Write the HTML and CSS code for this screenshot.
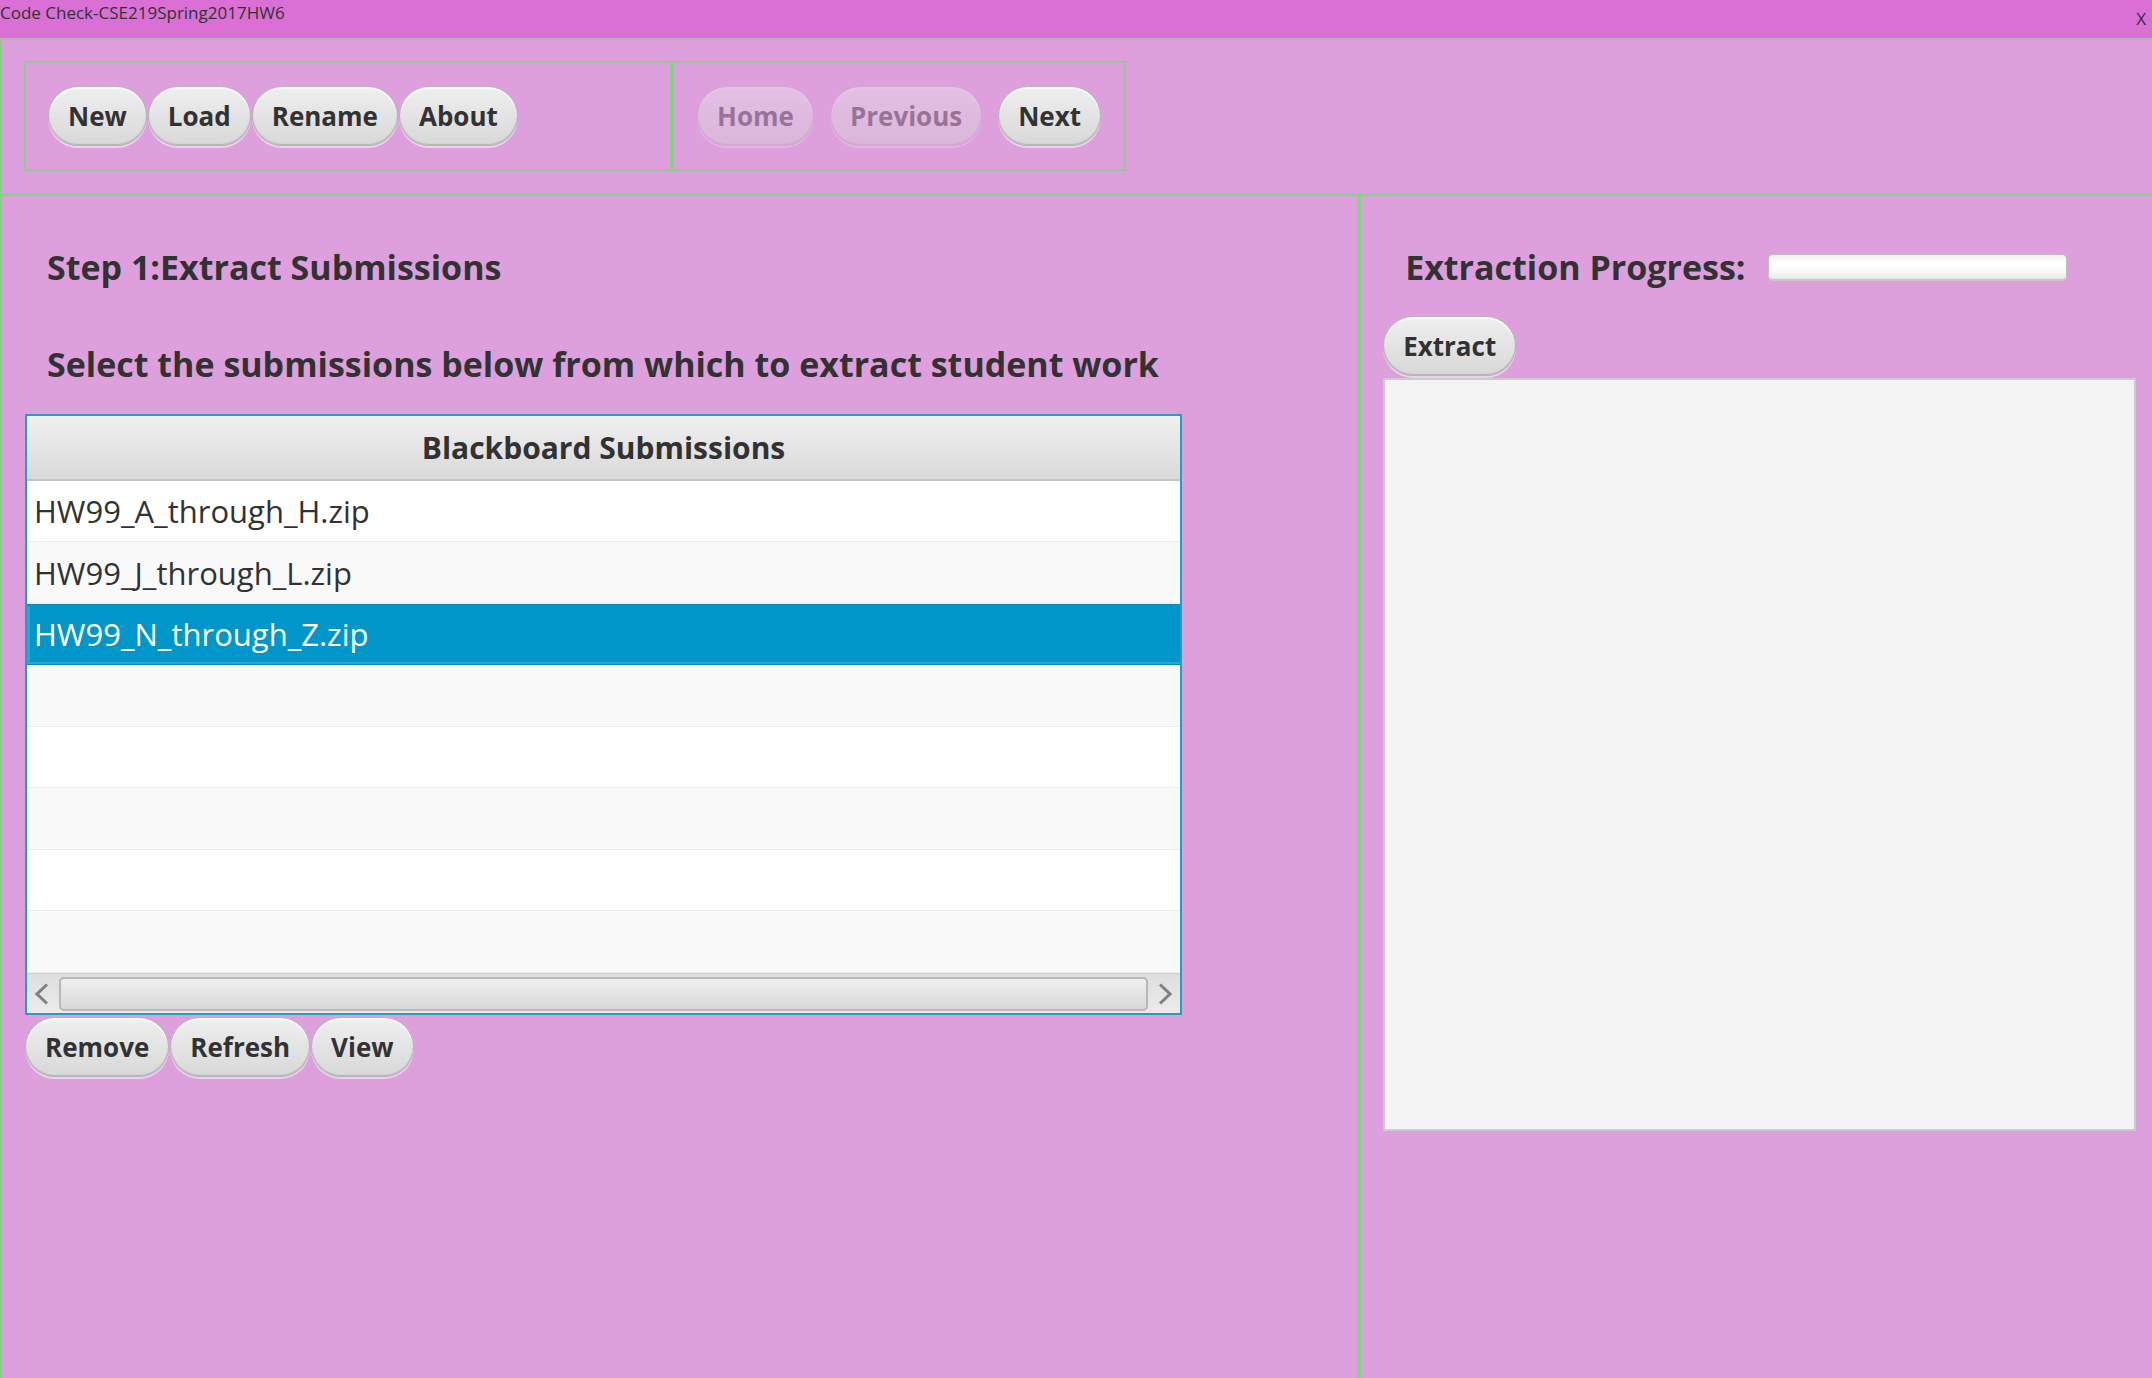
FILE: index.html
```html
<!DOCTYPE html>
<html lang="en">
<head>
<meta charset="utf-8">
<title>Code Check-CSE219Spring2017HW6</title>
<link rel="stylesheet" href="styles.css">
</head>
<body>
<header class="titlebar">
  <span class="titlebar-name">Code Check-CSE219Spring2017HW6</span>
  <button class="titlebar-close" type="button" aria-label="Close">X</button>
</header>
<div class="toolbar">
  <nav class="toolbar-group toolbar-file" aria-label="Project">
    <button class="btn" type="button">New</button>
    <button class="btn" type="button">Load</button>
    <button class="btn" type="button">Rename</button>
    <button class="btn" type="button">About</button>
  </nav>
  <nav class="toolbar-group toolbar-steps" aria-label="Steps">
    <button class="btn" type="button" disabled>Home</button>
    <button class="btn" type="button" disabled>Previous</button>
    <button class="btn" type="button">Next</button>
  </nav>
</div>
<main class="workspace">
  <section class="pane pane-left">
    <h1 class="heading">Step 1:Extract Submissions</h1>
    <h2 class="heading heading-sub">Select the submissions below from which to extract student work</h2>
    <div class="table-view">
      <table class="files">
        <thead><tr><th scope="col">Blackboard Submissions</th></tr></thead>
        <tbody>
          <tr><td>HW99_A_through_H.zip</td></tr>
          <tr><td>HW99_J_through_L.zip</td></tr>
          <tr class="selected" aria-selected="true"><td>HW99_N_through_Z.zip</td></tr>
          <tr><td></td></tr>
          <tr><td></td></tr>
          <tr><td></td></tr>
          <tr><td></td></tr>
          <tr><td></td></tr>
        </tbody>
      </table>
      <div class="scrollbar">
        <button class="scroll-arrow" type="button" aria-label="Scroll left">
          <svg width="16" height="22" viewBox="0 0 16 22"><path d="M12 1.500 L2 11 L12 20.500" fill="none" stroke="#808080" stroke-width="3"/></svg>
        </button>
        <div class="scroll-thumb"></div>
        <button class="scroll-arrow" type="button" aria-label="Scroll right">
          <svg width="16" height="22" viewBox="0 0 16 22"><path d="M4 1.500 L14 11 L4 20.500" fill="none" stroke="#808080" stroke-width="3"/></svg>
        </button>
      </div>
    </div>
    <div class="actions">
      <button class="btn" type="button">Remove</button>
      <button class="btn" type="button">Refresh</button>
      <button class="btn" type="button">View</button>
    </div>
  </section>
  <section class="pane pane-right">
    <div class="progress-row">
      <label class="heading" for="extraction">Extraction Progress:</label>
      <progress class="progress" id="extraction" value="0" max="100"></progress>
    </div>
    <div class="actions">
      <button class="btn" type="button">Extract</button>
    </div>
    <textarea class="output" aria-label="Extraction output" readonly></textarea>
  </section>
</main>
</body>
</html>
```
FILE: styles.css
```css
* {
  box-sizing: border-box;
}

body {
  margin: 0;
  min-height: 100vh;
  display: flex;
  flex-direction: column;
  background: #dda0dd;
  color: #323232;
  font-family: "Open Sans", "Noto Sans", sans-serif;
}

button {
  font-family: inherit;
  color: inherit;
}

.titlebar {
  display: flex;
  justify-content: space-between;
  height: 38px;
  background: #da70d6;
  font-size: 17px;
}

.titlebar-name {
  line-height: 26px;
}

.titlebar-close {
  padding: 0 6px;
  border: 0;
  background: none;
  font-size: 17px;
  line-height: 38px;
}

.toolbar {
  display: flex;
  padding: 21px 22px 22px;
  border: 2px solid #a8bca6;
  border-left-color: #84d488;
  border-right: 0;
  border-bottom: 0;
}

.toolbar-group {
  display: flex;
  padding: 23px 23px 21px;
  border: 2px solid #9ac49a;
}

.toolbar-file {
  flex: 0 1 648px;
  gap: 1px;
  padding-left: 22px;
  border-left-color: #8dce90;
  border-right-color: #84d488;
}

.toolbar-steps {
  gap: 16px;
  border-left-color: #84d488;
}

.btn {
  height: 60px;
  margin: 0 0 2px;
  padding: 0 19px;
  border: 1px solid #b9b4b9;
  border-radius: 30px;
  background: linear-gradient(#efefef, #d8d8d8);
  box-shadow: inset 0 2px 1px #fafafa, inset 0 -1px 1px #b4b4b4, 0 2px 0 #ebd3eb;
  font-size: 26px;
  font-weight: 700;
  line-height: 56px;
  white-space: nowrap;
}

.btn:disabled {
  opacity: 0.4;
}

.workspace {
  flex: 1;
  display: grid;
  grid-template-columns: 12fr 7fr;
  border-top: 3px solid #84d488;
}

.pane {
  border-left: 2px solid #84d488;
}

.pane-left {
  padding: 46px 24px 24px 23px;
  border-right: 2px solid #84d488;
}

.pane-right {
  padding: 46px 16px 24px 22px;
}

.heading {
  margin: 0;
  padding-left: 22px;
  font-size: 34px;
  font-weight: 700;
  line-height: 50px;
  white-space: nowrap;
}

.heading-sub {
  margin-top: 47px;
}

.table-view {
  max-width: 1157px;
  margin: 25px 0 2px;
  border: 2px solid #1ba1c9;
  background: #ffffff;
}

.files {
  width: 100%;
  border-collapse: collapse;
}

.files th {
  height: 64px;
  padding: 0;
  border-bottom: 2px solid #c4c4c4;
  background: linear-gradient(#f0f0f0, #d9d9d9);
  font-size: 30px;
  font-weight: 700;
  line-height: 60px;
}

.files td {
  height: 61px;
  padding: 0 7px;
  border-bottom: 1px solid #ececec;
  font-size: 31px;
  line-height: 60px;
}

.files tr:nth-child(even) td {
  height: 62px;
  background: #f9f9f9;
}

.files .selected td {
  border-bottom-color: #0a86b4;
  background: #0096c9;
  box-shadow: inset 0 2px 0 #0a8fc0, inset 3px -2px 0 #29a7d4;
  color: #ffffff;
}

.scrollbar {
  display: flex;
  height: 40px;
  padding: 3px 0 2px;
  border-top: 1px solid #d0d0d0;
  background: linear-gradient(#dedede, #ebebeb);
}

.scroll-arrow {
  display: flex;
  align-items: center;
  justify-content: center;
  width: 32px;
  padding: 0;
  border: 0;
  background: none;
}

.scroll-thumb {
  flex: 1;
  border: 2px solid #b8b8b8;
  border-radius: 5px;
  background: linear-gradient(#efefef, #d8d8d8);
}

.actions {
  display: flex;
  gap: 1px;
}

.progress-row {
  display: flex;
  align-items: center;
  gap: 22px;
  margin-bottom: 24px;
}

.progress {
  flex: 0 1 299px;
  height: 27px;
  border: 0;
  appearance: none;
}

.progress::-webkit-progress-bar {
  border: 1px solid #c6bcc6;
  border-bottom: 2px solid #cfc4cf;
  border-radius: 5px;
  background: linear-gradient(#f0f0f0, #ffffff 35%, #fbfbfb 65%, #e6e6e6);
}

.output {
  display: block;
  width: 100%;
  aspect-ratio: 1;
  padding: 12px;
  border: 2px solid #cfcacf;
  background: #f3f3f3;
  font-size: 26px;
  resize: none;
}
```
